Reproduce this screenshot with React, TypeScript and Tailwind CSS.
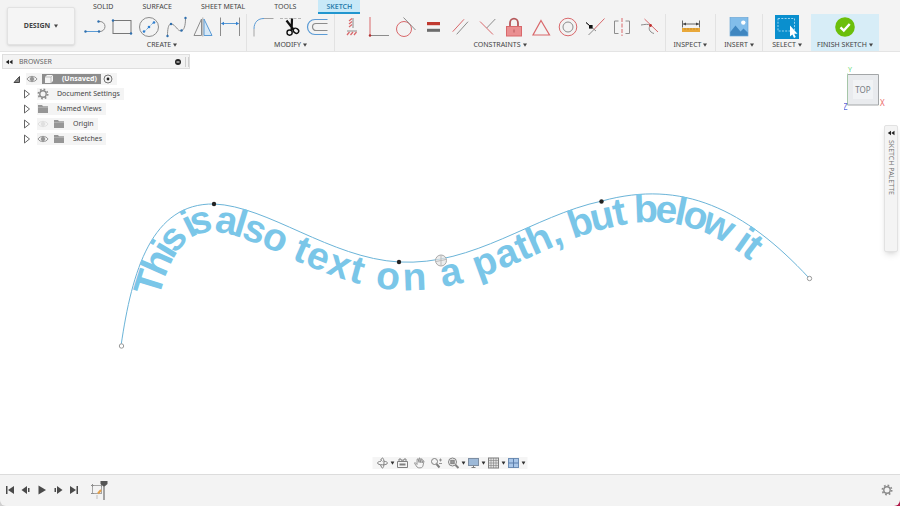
import type { ReactNode } from 'react'

const BLUE = '#5b9bd5'
const GRAY = '#8c8c8c'
const RED = '#d9686b'

interface Tool {
  name: string
  art: ReactNode
}

const TABS = ['SOLID', 'SURFACE', 'SHEET METAL', 'TOOLS', 'SKETCH']

const CREATE_TOOLS: Tool[] = [
  {
    name: 'Line',
    art: (
      <>
        <path d="M2.5 16.5H17a5 5 0 0 0 0-10H15.5" stroke={GRAY} />
        <path d="M2.5 16.5H16" stroke={BLUE} />
        <g fill="#2f6fae">
          <circle cx="2.5" cy="16.5" r="1.2" />
          <circle cx="16" cy="16.5" r="1.2" />
          <circle cx="15.5" cy="6.5" r="1.2" />
        </g>
      </>
    ),
  },
  {
    name: 'Rectangle',
    art: (
      <>
        <rect x="3" y="5.5" width="18" height="13" stroke="#777" />
        <g fill="#2f6fae">
          <circle cx="3" cy="5.5" r="1.2" />
          <circle cx="21" cy="18.5" r="1.2" />
        </g>
      </>
    ),
  },
  {
    name: 'Circle',
    art: (
      <>
        <circle cx="12" cy="12" r="9.5" stroke={GRAY} />
        <path d="M7 17L17 7" stroke={BLUE} strokeDasharray="2 1.5" />
        <g fill="#2f7fd0">
          <circle cx="7" cy="16.5" r="1.3" />
          <circle cx="12" cy="12" r="1.3" />
          <circle cx="17" cy="7.5" r="1.3" />
        </g>
      </>
    ),
  },
  {
    name: 'Spline',
    art: (
      <>
        <path d="M3.5 21C3.5 12 5 7 9 9.5C13 12 14 17 18 15.5C21 14 21.5 8 21.5 3" stroke={GRAY} />
        <g fill="#2f6fae">
          <circle cx="3.5" cy="21" r="1.2" />
          <circle cx="7" cy="9" r="1.2" />
          <circle cx="17.5" cy="15.5" r="1.2" />
          <circle cx="21.5" cy="3" r="1.2" />
        </g>
      </>
    ),
  },
  {
    name: 'Mirror',
    art: (
      <>
        <path d="M10.5 4L3 20.5H10.5Z" stroke={GRAY} />
        <path d="M13 4L21 20.5H13Z" stroke={BLUE} fill="#d6e8f7" />
        <path d="M11.8 2.5V21.5" stroke={GRAY} strokeWidth="0.7" />
      </>
    ),
  },
  {
    name: 'Dimension',
    art: (
      <>
        <path d="M2.5 2.5V21M21.5 2.5V21" stroke={GRAY} />
        <path d="M3.5 8.5H20.5" stroke={BLUE} />
        <path d="M3 8.5l3-1.8v3.6zM21 8.5l-3-1.8v3.6z" fill="#2f7fd0" />
      </>
    ),
  },
]

const MODIFY_TOOLS: Tool[] = [
  {
    name: 'Fillet',
    art: (
      <>
        <path d="M2 21.5V14M12 3.5H21.5" stroke="#a5a5a5" />
        <path d="M2 14C2 7 6 3.5 12 3.5" stroke={BLUE} />
      </>
    ),
  },
  {
    name: 'Trim',
    art: (
      <>
        <path d="M1 3.5H22" stroke="#b5b5b5" strokeDasharray="3 1.5" />
        <path d="M7.5 5.5L14.5 14.5M13 3.5L12.6 15" stroke="#111" strokeWidth="2.2" />
        <circle cx="10.6" cy="17.6" r="2.6" stroke="#111" strokeWidth="1.4" />
        <ellipse cx="17" cy="15.8" rx="2.9" ry="2.3" transform="rotate(35 17 15.8)" stroke="#111" strokeWidth="1.4" />
      </>
    ),
  },
  {
    name: 'Offset',
    art: (
      <>
        <path d="M21.5 4.5H9a7.5 7.5 0 0 0 0 15H21.5" stroke={BLUE} strokeWidth="1.2" />
        <path d="M21.5 8.5H10a3.5 3.5 0 0 0 0 7H21.5" stroke={GRAY} strokeWidth="1.2" />
      </>
    ),
  },
]

const CONSTRAINT_TOOLS: Tool[] = [
  {
    name: 'Horizontal/Vertical',
    art: (
      <>
        <path d="M13 3V13" stroke={GRAY} />
        <path d="M9 6l3-2.5M9 9l3-2.5M9 12l3-2.5" stroke={RED} strokeWidth="1.2" />
        <path d="M7 16H17" stroke={GRAY} />
        <path d="M7 20l2.5-3M10.5 20l2.5-3M14 20l2.5-3" stroke={RED} strokeWidth="1.3" />
      </>
    ),
  },
  {
    name: 'Coincident',
    art: (
      <>
        <path d="M3 2V20.5" stroke={RED} />
        <path d="M3 20.5H22" stroke={GRAY} />
        <circle cx="3" cy="20.5" r="1.2" fill="#b03030" />
      </>
    ),
  },
  {
    name: 'Tangent',
    art: (
      <>
        <circle cx="10" cy="14" r="7.5" stroke={RED} />
        <path d="M9.5 2.5L21.5 15" stroke={GRAY} />
      </>
    ),
  },
  {
    name: 'Equal',
    art: (
      <>
        <rect x="6" y="7" width="13" height="3.2" fill="#c0392f" />
        <rect x="6" y="13.8" width="13" height="3" fill="#6c6c6c" />
      </>
    ),
  },
  {
    name: 'Parallel',
    art: (
      <>
        <path d="M4.7 16.7L16 4.3" stroke={RED} />
        <path d="M8.7 19.3L20 6.7" stroke={GRAY} />
      </>
    ),
  },
  {
    name: 'Perpendicular',
    art: (
      <>
        <path d="M5 6.5L18 19.5" stroke={RED} />
        <path d="M11.7 13L20.3 4" stroke={GRAY} />
      </>
    ),
  },
  {
    name: 'Fix/Unfix',
    art: (
      <>
        <path d="M8 12V8a4 4.3 0 0 1 8 0v4" stroke="#b5585b" strokeWidth="1.8" />
        <rect x="4.5" y="11.5" width="15" height="9.5" fill="#ea8f91" stroke="#d9686b" />
        <path d="M12 14.5v3" stroke="#b5585b" />
      </>
    ),
  },
  {
    name: 'Midpoint',
    art: <path d="M12 5.5L20.5 20H4Z" stroke={RED} strokeWidth="1.2" />,
  },
  {
    name: 'Concentric',
    art: (
      <>
        <circle cx="12" cy="12" r="8.8" stroke={RED} />
        <circle cx="12" cy="12" r="5" stroke={GRAY} />
      </>
    ),
  },
  {
    name: 'Collinear',
    art: (
      <>
        <path d="M10.5 15L21.5 3.5" stroke={RED} />
        <path d="M5.5 20L10.5 15M3 7.5L13 16" stroke={GRAY} />
        <path d="M3 7.5L7 11" stroke="#111" />
        <rect x="6" y="10" width="3.6" height="3.6" fill="#111" />
      </>
    ),
  },
  {
    name: 'Symmetry',
    art: (
      <>
        <path d="M8.5 6H4.5V18.5H8.5M15.5 6H19.5V18.5H15.5" stroke={GRAY} />
        <path d="M12 3V21" stroke={RED} strokeDasharray="4 1.5" />
      </>
    ),
  },
  {
    name: 'Curvature',
    art: (
      <>
        <path d="M7.5 4L21 17" stroke={RED} />
        <path d="M4 10C8 9.5 11 8.5 13.5 10.5C11 13 12 17 17 18.5" stroke={GRAY} />
        <circle cx="13.5" cy="10.5" r="1.4" fill="#c0302f" />
      </>
    ),
  },
]

const INSPECT_TOOLS: Tool[] = [
  {
    name: 'Measure',
    art: (
      <>
        <path d="M3.5 5.5V12.5M20.5 5.5V12.5M4 9H20" stroke="#666" />
        <path d="M4 9l3-1.6v3.2zM20 9l-3-1.6v3.2z" fill="#444" />
        <rect x="3" y="13" width="18" height="4" fill="#e9a83a" />
        <path d="M6 13v2M9 13v2M12 13v2M15 13v2M18 13v2" stroke="#b97d1c" strokeWidth="0.6" />
      </>
    ),
  },
]

const INSERT_TOOLS: Tool[] = [
  {
    name: 'Insert image',
    art: (
      <>
        <rect x="3" y="2.5" width="18" height="18.5" fill="#82bdea" stroke="#5f9fd2" strokeWidth="0.6" />
        <circle cx="16.3" cy="7.6" r="2.2" fill="#fff" />
        <path d="M3.3 17L8.5 10.5L13.5 16.5L16.5 13.5L20.7 17.5V20.7H3.3Z" fill="#3f86c0" />
      </>
    ),
  },
]

const SELECT_TOOLS: Tool[] = [
  {
    name: 'Select',
    art: (
      <>
        <rect width="24" height="24" fill="#0a8fce" />
        <rect x="3" y="3.5" width="16.5" height="12.5" stroke="#a9dcf5" strokeDasharray="2 1.3" strokeWidth="0.9" />
        <path d="M15 10.5V21.5L17.4 19.4L19 23L20.8 22.1L19.2 18.7H22.5Z" fill="#fff" />
      </>
    ),
  },
]

const FINISH_TOOLS: Tool[] = [
  {
    name: 'Finish',
    art: (
      <>
        <circle cx="12" cy="12" r="9.8" fill="#6bbf0b" />
        <path d="M7.5 12.3L10.8 15.5L16.7 9" stroke="#fff" strokeWidth="2.4" />
      </>
    ),
  },
]

// Spline the lettering hangs from
const CURVE =
  'M121 346C132 270 152 203 214 204C268 206 330 258 399 262C475 266 532 216 602 201C682 179 745 209 809 278'

function Caret() {
  return (
    <svg viewBox="0 0 4 4" className="size-1 shrink-0" fill="currentColor" aria-hidden="true">
      <path d="M0 .5H4L2 3.7Z" />
    </svg>
  )
}

function Gear({ className }: { className: string }) {
  return (
    <svg viewBox="0 0 12 12" className={className} fill="none" stroke="currentColor" aria-hidden="true">
      <circle cx="6" cy="6" r="3.2" strokeWidth="1.4" />
      <circle cx="6" cy="6" r="4.7" strokeWidth="1.6" strokeDasharray="1.7 1.99" />
    </svg>
  )
}

function Eye({ className }: { className: string }) {
  return (
    <svg viewBox="0 0 12 12" className={className} fill="none" stroke="currentColor" aria-hidden="true">
      <path d="M1 6C3 2.5 9 2.5 11 6C9 9.5 3 9.5 1 6Z" />
      <circle cx="6" cy="6" r="1.8" fill="currentColor" />
    </svg>
  )
}

function Folder() {
  return (
    <svg viewBox="0 0 12 12" className="size-3" fill="#969696" aria-hidden="true">
      <path d="M1 2H5L6 3.2H11V10H1Z" />
      <path d="M1 4.4H11" stroke="#c4c4c4" strokeWidth="0.6" />
    </svg>
  )
}

function Rewind() {
  return (
    <svg viewBox="0 0 8 6" className="h-1.5 w-2 shrink-0" fill="#222" aria-hidden="true">
      <path d="M4 .8V5.2L.8 3ZM7.5 .8V5.2L4.3 3Z" />
    </svg>
  )
}

function ToolGroup({ label, tools, className }: { label: string; tools: Tool[]; className: string }) {
  return (
    <div className={`flex flex-col items-center pt-px ${className}`}>
      <div className="flex">
        {tools.map((t) => (
          <button key={t.name} aria-label={t.name} className="flex h-6 w-[27px] justify-center">
            <svg viewBox="0 0 24 24" className="size-6" fill="none">
              {t.art}
            </svg>
          </button>
        ))}
      </div>
      <button className="flex h-3 items-center gap-0.5 whitespace-nowrap">
        {label}
        <Caret />
      </button>
    </div>
  )
}

function Toolbar() {
  return (
    <header className="flex shrink-0 border-b border-[#e4e4e4] bg-[#f3f3f3]">
      <button className="mt-[7px] mr-[3px] ml-[7px] flex h-[38px] w-[68px] items-center justify-center gap-1 rounded-xs border border-[#e2e2e2] bg-[#f5f5f5] font-bold shadow-sm">
        DESIGN
        <Caret />
      </button>
      <div className="min-w-0 flex-1">
        <nav className="ml-2 flex h-3.5 gap-[15px]">
          {TABS.map((tab) => (
            <button
              key={tab}
              className={`leading-[14px] whitespace-nowrap ${
                tab === 'SKETCH'
                  ? 'bg-[#c8e9f8] px-2 font-semibold text-[#2b7fae] shadow-[inset_0_-2px_0_#2196cf]'
                  : 'px-[7px]'
              }`}
            >
              {tab}
            </button>
          ))}
        </nav>
        <div className="flex">
          <ToolGroup label="CREATE" tools={CREATE_TOOLS} className="border-r border-[#e2e2e2] px-[3px]" />
          <ToolGroup label="MODIFY" tools={MODIFY_TOOLS} className="border-r border-[#e2e2e2] px-[3px]" />
          <ToolGroup label="CONSTRAINTS" tools={CONSTRAINT_TOOLS} className="border-r border-[#e2e2e2] px-[3px]" />
          <ToolGroup label="INSPECT" tools={INSPECT_TOOLS} className="w-[50px] border-r border-[#e2e2e2]" />
          <ToolGroup label="INSERT" tools={INSERT_TOOLS} className="w-[47px] border-r border-[#e2e2e2]" />
          <ToolGroup label="SELECT" tools={SELECT_TOOLS} className="w-12" />
          <ToolGroup label="FINISH SKETCH" tools={FINISH_TOOLS} className="w-[68px] bg-[#d7edf7]" />
        </div>
      </div>
    </header>
  )
}

interface TreeRow {
  label: string
  icon: 'gear' | 'folder'
  eye?: 'on' | 'off'
}

const TREE: TreeRow[] = [
  { label: 'Document Settings', icon: 'gear' },
  { label: 'Named Views', icon: 'folder' },
  { label: 'Origin', icon: 'folder', eye: 'off' },
  { label: 'Sketches', icon: 'folder', eye: 'on' },
]

function Browser() {
  return (
    <section className="relative w-[188px]">
      <div className="flex h-[15px] items-center border border-[#dedede] bg-[#f3f3f3] pl-0.5 text-[#666]">
        <Rewind />
        <span className="ml-1.5 flex-1">BROWSER</span>
        <button aria-label="Collapse browser" className="mr-1">
          <svg viewBox="0 0 6 6" className="size-1.5">
            <circle cx="3" cy="3" r="3" fill="#222" />
            <path d="M1.5 3H4.5" stroke="#fff" />
          </svg>
        </button>
        <span className="h-2.5 w-1 border-x border-[#cfcfcf]" />
      </div>

      <ul className="mt-0.5">
        <li className="flex h-[15px] items-center pl-2">
          <svg viewBox="0 0 12 12" className="mr-1 size-3" aria-hidden="true">
            <path d="M4 9.5L9.5 3.5V9.5Z" fill="#888" stroke="#444" />
          </svg>
          <div className="flex h-3 items-center bg-[#f4f4f4] pr-1">
            <Eye className="size-3 text-[#959595]" />
            <button className="ml-1 flex h-2.5 items-center bg-[#8d8d8d] pr-1 pl-0.5 font-bold text-white">
              <svg viewBox="0 0 10 10" className="mr-2 size-2.5" aria-hidden="true">
                <path d="M1 3L3 1H9V7L7 9H1Z" fill="#f4f4f4" />
                <path d="M1 3H7V9M7 3L9 1" stroke="#aaa" fill="none" strokeWidth="0.7" />
              </svg>
              (Unsaved)
            </button>
            <svg viewBox="0 0 10 10" className="ml-0.5 size-2.5" fill="none" aria-hidden="true">
              <circle cx="5" cy="5" r="4" stroke="#555" strokeWidth="0.8" />
              <circle cx="5" cy="5" r="1.4" fill="#222" />
            </svg>
          </div>
        </li>
        {TREE.map((row) => (
          <li key={row.label} className="flex h-[15px] items-center pl-[21px]">
            <svg viewBox="0 0 8 10" className="mr-1.5 h-2.5 w-2" fill="none" aria-hidden="true">
              <path d="M1.5 1V9L6.5 5Z" stroke="#666" />
            </svg>
            <button className="flex h-3 items-center bg-[#f4f4f4] pr-1">
              {row.eye && (
                <Eye className={`mr-1 size-3 ${row.eye === 'on' ? 'text-[#959595]' : 'text-[#e0e0e0]'}`} />
              )}
              {row.icon === 'gear' ? <Gear className="size-3 text-[#8a8a8a]" /> : <Folder />}
              <span className="ml-2">{row.label}</span>
            </button>
          </li>
        ))}
      </ul>
    </section>
  )
}

function Sketch() {
  return (
    <svg viewBox="0 52 900 422" className="absolute inset-0 size-full" fill="none">
      <path id="spline" d={CURVE} stroke="#6bb4d8" />
      <text dy="28" fontSize="39" fill="#7ac6e8" className="font-['Liberation_Sans',sans-serif] font-bold">
        <textPath href="#spline" startOffset="57">
          This is also text on a path, but below it
        </textPath>
      </text>
      <g fill="#222">
        <circle cx="214" cy="204" r="2.2" />
        <circle cx="399" cy="262" r="2.2" />
        <circle cx="601.5" cy="201.5" r="2.2" />
      </g>
      <g fill="#fff" stroke="#999">
        <circle cx="121.5" cy="346" r="2.2" />
        <circle cx="809.5" cy="278.5" r="2.2" />
      </g>
      {/* Cursor snapped on the spline */}
      <circle cx="441" cy="260.5" r="5.5" fill="#e6e6e6" fillOpacity="0.7" stroke="#aaa" />
      <path d="M441 255V266M436 261.5L446 259.5" stroke="#bbb" />
    </svg>
  )
}

function ViewCube() {
  return (
    <svg viewBox="0 0 44 50" className="absolute top-3 right-3 h-[50px] w-11 font-['Noto_Sans']" fill="none">
      <path d="M3.5 10.5H34.5V41H3.5Z" fill="#e9ebee" stroke="#a3a6a8" />
      <rect x="9" y="16" width="20" height="19" fill="#f1f3f5" />
      <path d="M3.5 41V9" stroke="#a8e6a8" strokeWidth="0.5" />
      <text x="19" y="29" textAnchor="middle" fontSize="8" fill="#777c82">TOP</text>
      <text x="4" y="8" fontSize="7" fill="#6ddc7a">Y</text>
      <text x="36" y="42" fontSize="8" fill="#ec6a6a">X</text>
      <text x="-1" y="46" fontSize="8" fill="#6668d8">Z</text>
    </svg>
  )
}

const NAV_ICONS: { name: string; caret?: boolean; art: ReactNode }[] = [
  {
    name: 'Orbit',
    caret: true,
    art: (
      <>
        <path d="M4.5 4.2C2 4.6 1 5.3 1 6C1 7.2 3.5 7.8 6 7.8C8.5 7.8 11 7.2 11 6C11 5.3 10 4.6 7.5 4.2" />
        <path d="M4.5 8.5C4.8 10.3 5.3 11 6 11C7 11 7.5 8.5 7.5 6C7.5 3.5 7 1 6 1C5.3 1 4.8 1.7 4.5 3.5" />
        <path d="M4 2.5L6 4.5M3 7.5L5 9.5" strokeWidth="0.7" />
      </>
    ),
  },
  {
    name: 'Look At',
    art: (
      <>
        <path d="M1 4.5H11V10.5H1ZM2.5 4.5V2H4.5V3.2H7.5V2H9.5V4.5" />
        <path d="M3 7.5H9" strokeWidth="2" />
      </>
    ),
  },
  {
    name: 'Pan',
    art: <path strokeWidth="0.8" d="M3.5 7.5L1.5 5.5L1 6.3L3.5 10C4.5 11.3 8.5 11.3 9.3 9.5L10.5 4L9.7 3.6L8.5 6L8.7 2L7.8 1.8L7 5.5L6.5 1H5.6V5.5L4.5 1.8L3.6 2.2Z" />,
  },
  {
    name: 'Zoom',
    art: (
      <>
        <circle cx="4" cy="4.5" r="3" />
        <path d="M6 7L9 10.5" strokeWidth="2" />
        <path d="M8.5 3H11.5M10 1.5V4.5M8.5 6.5H11.5" strokeWidth="0.8" />
      </>
    ),
  },
  {
    name: 'Fit',
    caret: true,
    art: (
      <>
        <circle cx="5" cy="5" r="4" />
        <rect x="3.3" y="3.3" width="3.4" height="3.4" fill="#999" />
        <path d="M8 8L11 11" strokeWidth="2" />
      </>
    ),
  },
  {
    name: 'Display Settings',
    caret: true,
    art: (
      <>
        <rect x="1" y="1.5" width="10" height="7" fill="#9db9d8" stroke="#7d8ea3" />
        <path d="M4 10.5H8M6 8.5V10.5" />
      </>
    ),
  },
  {
    name: 'Grid and Snaps',
    caret: true,
    art: (
      <>
        <rect x="1" y="1" width="10" height="10" fill="#e3e3e3" />
        <path d="M3.5 1V11M6 1V11M8.5 1V11M1 3.5H11M1 6H11M1 8.5H11" strokeWidth="0.6" />
      </>
    ),
  },
  {
    name: 'Viewports',
    caret: true,
    art: (
      <>
        <rect x="1" y="1.5" width="10" height="9" fill="#a9c6e8" stroke="#6d8db4" />
        <path d="M6 1.5V10.5M1 6H11" stroke="#5c7fac" />
      </>
    ),
  },
]

function NavBar() {
  return (
    <div className="absolute bottom-[5px] left-1/2 flex -translate-x-1/2 items-center bg-[#f5f5f5] pl-1 text-[#333]">
      {NAV_ICONS.map((icon) => (
        <button
          key={icon.name}
          aria-label={icon.name}
          className={`flex items-center gap-0.5 ${icon.caret ? 'w-5' : 'w-[17px]'}`}
        >
          <svg viewBox="0 0 12 12" className="size-3 shrink-0" fill="none" stroke="#808080">
            {icon.art}
          </svg>
          {icon.caret && <Caret />}
        </button>
      ))}
    </div>
  )
}

const PLAYBACK = [
  { name: 'Go to start', d: 'M2 2H3.5V10H2ZM10 2V10L4 6Z' },
  { name: 'Step back', d: 'M7 2V10L1.5 6ZM8 4H9.5V8H8Z' },
  { name: 'Play', d: 'M2.5 1.5V10.5L10 6Z' },
  { name: 'Step forward', d: 'M5 2V10L10.5 6ZM2.5 4H4V8H2.5Z' },
  { name: 'Go to end', d: 'M2 2V10L8 6ZM8.5 2H10V10H8.5Z' },
]

function Timeline() {
  return (
    <div className="shrink-0 bg-linear-to-r from-[#cfcfcf] to-[#b01848]">
      <footer className="flex h-8 items-center rounded-b-md border-t border-[#dcdcdc] bg-[#f3f3f3] pr-[7px] pb-px pl-1">
        {PLAYBACK.map((p) => (
          <button key={p.name} aria-label={p.name} className="mr-1">
            <svg viewBox="0 0 12 12" className="size-3" fill="#4a4a4a">
              <path d={p.d} />
            </svg>
          </button>
        ))}
        <button aria-label="Sketch feature" className="ml-1.5">
          <svg viewBox="0 0 20 20" className="size-5" fill="none">
            <rect x="2.5" y="5.5" width="9" height="8" stroke="#a5a5a5" />
            <path d="M1 5.5H4M2.5 4V7M11.5 4V7M1 13.5H4" stroke="#8f8f8f" />
            <path d="M8 13.5L11 10" stroke="#e5a04a" strokeWidth="2" />
            <path d="M7 15V19" stroke="#aaa" strokeWidth="0.7" />
            <path d="M10.5 1H17.5V4L14.5 6.5V20H13.5V6.5L10.5 4Z" fill="#555" />
          </svg>
        </button>
        <button aria-label="Timeline settings" className="ml-auto">
          <Gear className="size-3 text-[#8a8a8a]" />
        </button>
      </footer>
    </div>
  )
}

export default function App() {
  return (
    <div className="flex h-screen flex-col overflow-hidden bg-white font-['Noto_Sans',sans-serif] text-[7px]/3 text-[#444]">
      <Toolbar />
      <main className="relative flex-1 pt-0.5 pl-0.5">
        <Sketch />
        <Browser />
        <ViewCube />
        <aside className="absolute top-[73px] right-0.5 flex h-[127px] w-3.5 flex-col items-center gap-1 rounded-xs border border-[#e2e2e2] bg-[#f4f4f4] pt-1 text-[#777] shadow-md">
          <Rewind />
          <span className="[writing-mode:vertical-rl]">SKETCH PALETTE</span>
        </aside>
        <NavBar />
      </main>
      <Timeline />
    </div>
  )
}
